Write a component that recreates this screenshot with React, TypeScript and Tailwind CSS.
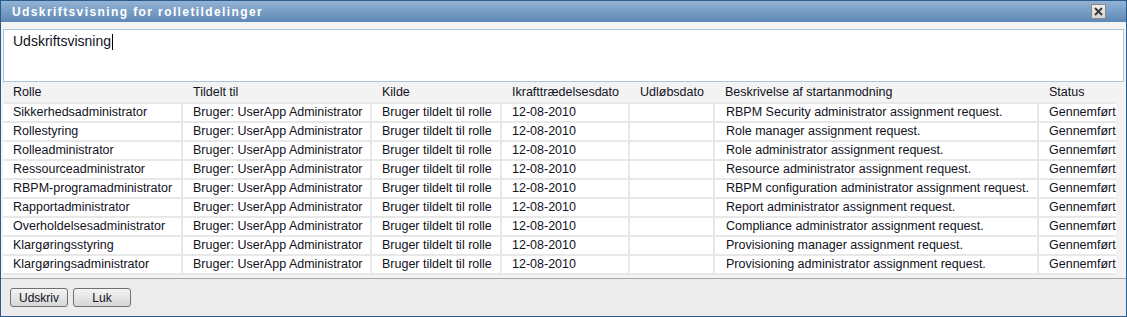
const columns = ["Rolle", "Tildelt til", "Kilde", "Ikrafttrædelsesdato", "Udløbsdato", "Beskrivelse af startanmodning", "Status"];

const rows = [
  ["Sikkerhedsadministrator", "RBPM Security administrator assignment request."],
  ["Rollestyring", "Role manager assignment request."],
  ["Rolleadministrator", "Role administrator assignment request."],
  ["Ressourceadministrator", "Resource administrator assignment request."],
  ["RBPM-programadministrator", "RBPM configuration administrator assignment request."],
  ["Rapportadministrator", "Report administrator assignment request."],
  ["Overholdelsesadministrator", "Compliance administrator assignment request."],
  ["Klargøringsstyring", "Provisioning manager assignment request."],
  ["Klargøringsadministrator", "Provisioning administrator assignment request."],
];

const gridCols = "grid grid-cols-[178px_187px_128px_126px_83px_322px_77px] gap-x-[2px]";
const cell = "h-[17px] bg-white pl-[10px] leading-[17px] whitespace-nowrap overflow-hidden";

const App = () => {
  return (
    <div className="w-[1127px] h-[317px] flex flex-col border border-[#2b5b8b] bg-[#f3f3f3] text-[12.5px] text-[#111122] font-['Liberation_Sans',Arial,sans-serif] overflow-hidden">
      <div className="h-[21px] shrink-0 flex items-center justify-between bg-gradient-to-b from-[#93b3d4] to-[#5d88b6] pl-[11px] pr-[20px]">
        <span className="text-white font-bold tracking-[1.4px] text-[12px]">Udskriftsvisning for rolletildelinger</span>
        <div className="w-[15px] h-[15px] flex items-center justify-center bg-gradient-to-b from-[#eeeeee] to-[#d6d6d6] border border-[#8a8a8a]">
          <svg width="11" height="11" viewBox="0 0 11 11">
            <path d="M2 2 L9 9 M9 2 L2 9" stroke="#3c3c3c" strokeWidth="2" />
          </svg>
        </div>
      </div>

      <div className="flex flex-col px-[2px] pt-[7px]">
        <div className="h-[53px] bg-white border border-[#a9c6e0] px-[9px] pt-[1px]">
          <span className="text-[14px]">Udskriftsvisning</span>
          <span className="inline-block w-px h-[16px] bg-black align-middle ml-[1px] -mt-[2px]" />
        </div>

        <div className={`${gridCols} h-[20px] items-center`}>
          {columns.map((c) => (
            <div key={c} className="pl-[10px] whitespace-nowrap">{c}</div>
          ))}
        </div>

        <div className="flex flex-col gap-y-[2px] bg-[#e8e8e8] w-[1113px] pt-[2px] pb-[2px]">
          {rows.map(([role, desc]) => (
            <div key={role} className={gridCols}>
              <div className={cell}>{role}</div>
              <div className={cell}>Bruger: UserApp Administrator</div>
              <div className={cell}>Bruger tildelt til rolle</div>
              <div className={cell}>12-08-2010</div>
              <div className="h-[17px] bg-white" />
              <div className={`${cell} pl-[11px]`}>{desc}</div>
              <div className={cell}>Gennemført</div>
            </div>
          ))}
        </div>
      </div>

      <div className="flex-1 mt-[3px] border-t border-[#a8a8a8] bg-[#ececec] flex items-start gap-[5px] pl-[9px] pt-[9px]">
        <button className="w-[58px] h-[19px] rounded-[3px] border border-[#707070] bg-gradient-to-b from-[#f4f4f4] to-[#d6d6d6] text-[12px] leading-none">Udskriv</button>
        <button className="w-[58px] h-[19px] rounded-[3px] border border-[#707070] bg-gradient-to-b from-[#f4f4f4] to-[#d6d6d6] text-[12px] leading-none">Luk</button>
      </div>
    </div>
  );
};

export default App;
